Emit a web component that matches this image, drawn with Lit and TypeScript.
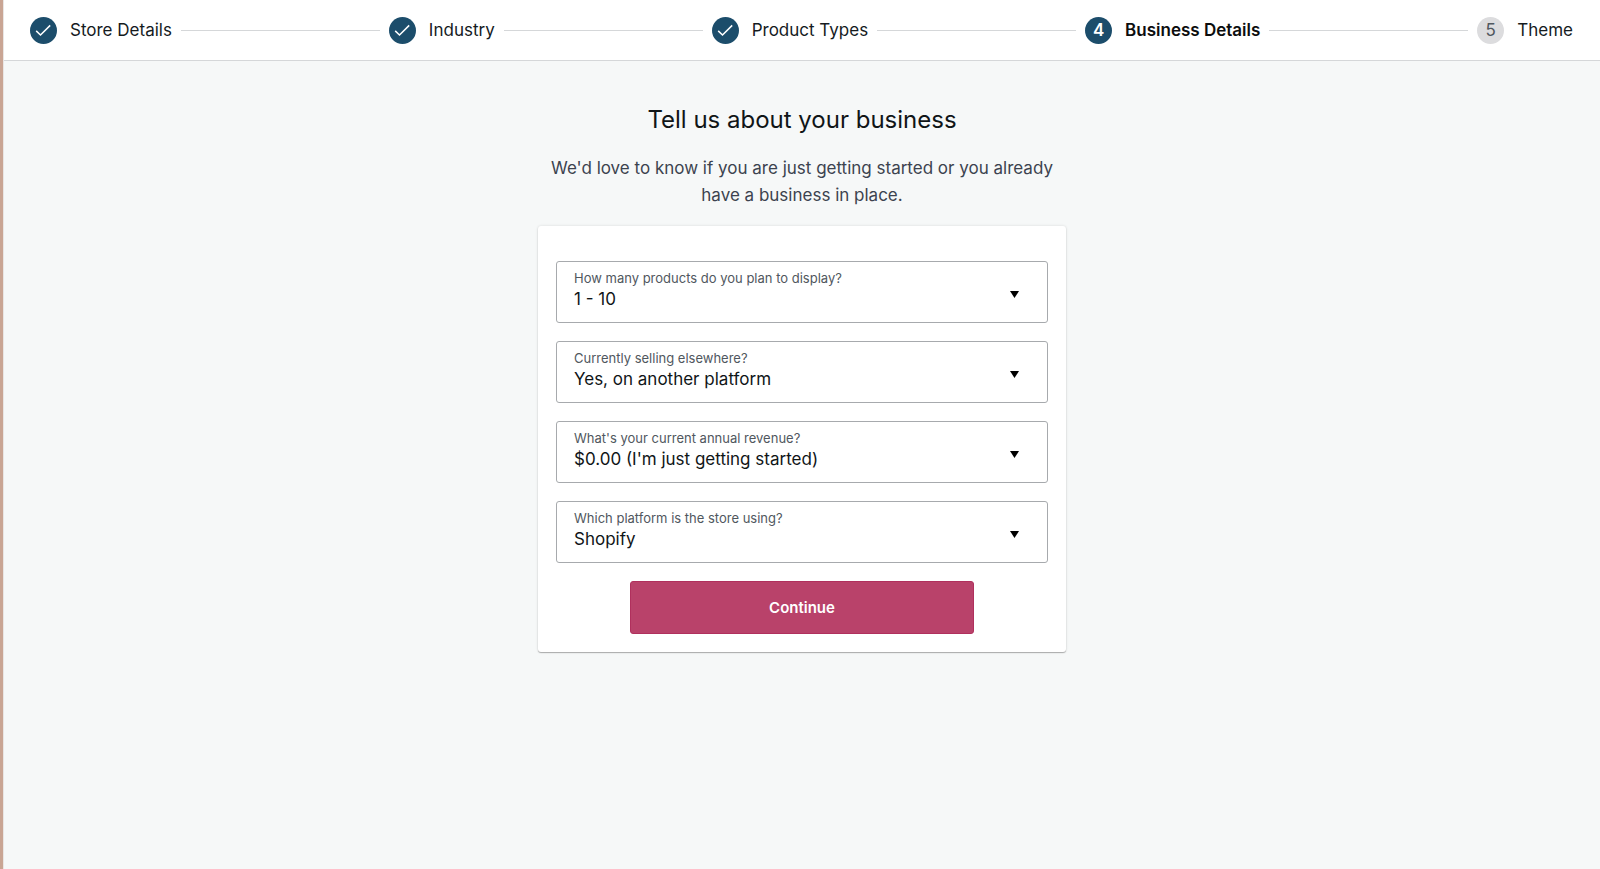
import { LitElement, html, css, svg } from "lit";
import { customElement, property, state } from "lit/decorators.js";
import { classMap } from "lit/directives/class-map.js";

type StepStatus = "done" | "current" | "upcoming";

interface Step {
  label: string;
  status: StepStatus;
}

interface Question {
  name: string;
  label: string;
  value: string;
  options: string[];
}

const STEPS: Step[] = [
  { label: "Store Details", status: "done" },
  { label: "Industry", status: "done" },
  { label: "Product Types", status: "done" },
  { label: "Business Details", status: "current" },
  { label: "Theme", status: "upcoming" },
];

const QUESTIONS: Question[] = [
  {
    name: "product-count",
    label: "How many products do you plan to display?",
    value: "1 - 10",
    options: ["1 - 10"],
  },
  {
    name: "selling-venues",
    label: "Currently selling elsewhere?",
    value: "Yes, on another platform",
    options: ["Yes, on another platform"],
  },
  {
    name: "revenue",
    label: "What's your current annual revenue?",
    value: "$0.00 (I'm just getting started)",
    options: ["$0.00 (I'm just getting started)"],
  },
  {
    name: "platform",
    label: "Which platform is the store using?",
    value: "Shopify",
    options: ["Shopify"],
  },
];

const checkIcon = svg`
  <svg class="check" viewBox="0 0 27 27" aria-hidden="true">
    <path d="M6.2 13.9 L10.5 18 L20.2 8.4" fill="none" stroke="#fff" stroke-width="1.5" />
  </svg>`;

@customElement("profile-stepper")
class ProfileStepper extends LitElement {
  @property({ attribute: false }) steps: Step[] = [];

  static styles = css`
    :host {
      display: block;
      background: #fff;
      border-bottom: 1px solid #d5d7d9;
    }
    .steps {
      display: flex;
      align-items: center;
      gap: 9px;
      min-height: 60px;
      margin: 0;
      padding: 0 27px 0 26px;
      list-style: none;
    }
    .step {
      display: flex;
      align-items: center;
      gap: 13px;
      font-size: 17px;
      line-height: 24px;
      color: #151b1e;
      white-space: nowrap;
    }
    .line {
      flex: 1;
      height: 1px;
      background: #d5d7d9;
    }
    .badge {
      display: flex;
      align-items: center;
      justify-content: center;
      width: 27px;
      height: 27px;
      border-radius: 50%;
      background: #1c4d6b;
      color: #fff;
    }
    .current {
      font-weight: 600;
      color: #0c0d0e;
    }
    .upcoming .badge {
      background: #dcdcde;
      color: #50575e;
    }
    .check {
      width: 27px;
      height: 27px;
    }
  `;

  render() {
    return html`
      <ol class="steps">
        ${this.steps.map(
          (step, i) => html`
            ${i > 0 ? html`<li class="line" role="presentation"></li>` : ""}
            <li
              class=${classMap({ step: true, [step.status]: true })}
              aria-current=${step.status === "current" ? "step" : "false"}
            >
              <span class="badge">${step.status === "done" ? checkIcon : i + 1}</span>
              <span>${step.label}</span>
            </li>
          `
        )}
      </ol>
    `;
  }
}

@customElement("select-field")
class SelectField extends LitElement {
  @property({ attribute: false }) question!: Question;

  static styles = css`
    :host {
      display: grid;
    }
    .label,
    .select,
    .arrow {
      grid-area: 1 / 1;
    }
    .label {
      z-index: 1;
      align-self: start;
      justify-self: start;
      padding: 8px 18px 0;
      font-size: 13px;
      line-height: 18px;
      color: #50575e;
      pointer-events: none;
    }
    .select {
      appearance: none;
      box-sizing: border-box;
      width: 100%;
      margin: 0;
      padding: 26px 48px 12px 17px;
      border: 1px solid #a7aaad;
      border-radius: 3px;
      background: #fff;
      font: inherit;
      font-size: 17px;
      line-height: 22px;
      color: #101517;
    }
    .select:focus-visible {
      outline: 2px solid #1c4d6b;
    }
    .arrow {
      z-index: 1;
      align-self: center;
      justify-self: end;
      width: 9px;
      height: 7px;
      margin: 4px 29px 0 0;
      pointer-events: none;
    }
  `;

  render() {
    const { name, label, value, options } = this.question;
    return html`
      <label class="label" for=${name}>${label}</label>
      <select class="select" id=${name} name=${name}>
        ${options.map((o) => html`<option ?selected=${o === value}>${o}</option>`)}
      </select>
      <svg class="arrow" viewBox="0 0 9 7" aria-hidden="true">
        <path d="M0 0 H9 L4.5 7 Z" fill="#000" />
      </svg>
    `;
  }
}

@customElement("app-root")
class AppRoot extends LitElement {
  @state() questions = QUESTIONS;

  static styles = css`
    :host {
      display: block;
      box-sizing: border-box;
      min-height: 100vh;
      border-left: 3px solid #c9a594;
      background: #f6f8f8;
      box-shadow: inset 1px 0 #e9e6e4;
      padding-left: 1px;
      font-family: Inter, "Liberation Sans", sans-serif;
    }
    .content {
      display: flex;
      flex-direction: column;
      align-items: center;
      padding: 43px 16px;
    }
    .title {
      margin: 0 0 19px;
      font-size: 24px;
      font-weight: 400;
      line-height: 32px;
      color: #101517;
    }
    .intro {
      max-width: 528px;
      margin: 0 0 17px;
      font-size: 17px;
      line-height: 27px;
      text-align: center;
      color: #3c434f;
    }
    .card {
      display: flex;
      flex-direction: column;
      gap: 18px;
      box-sizing: border-box;
      width: 100%;
      max-width: 528px;
      padding: 35px 18px 18px;
      border-radius: 3px;
      background: #fff;
      box-shadow: 0 1px 1px rgba(0, 0, 0, 0.28), 0 0 3px rgba(0, 0, 0, 0.12);
    }
    .continue {
      align-self: center;
      width: 70%;
      padding: 15px;
      border: 1px solid #b0305d;
      border-radius: 3px;
      background: #b9426a;
      font: inherit;
      font-size: 15px;
      font-weight: 600;
      line-height: 21px;
      color: #fff;
      cursor: pointer;
    }
  `;

  render() {
    return html`
      <profile-stepper .steps=${STEPS}></profile-stepper>
      <main class="content">
        <h1 class="title">Tell us about your business</h1>
        <p class="intro">
          We'd love to know if you are just getting started or you already have a business in place.
        </p>
        <form class="card" @submit=${(e: Event) => e.preventDefault()}>
          ${this.questions.map((q) => html`<select-field .question=${q}></select-field>`)}
          <button class="continue" type="submit">Continue</button>
        </form>
      </main>
    `;
  }
}
